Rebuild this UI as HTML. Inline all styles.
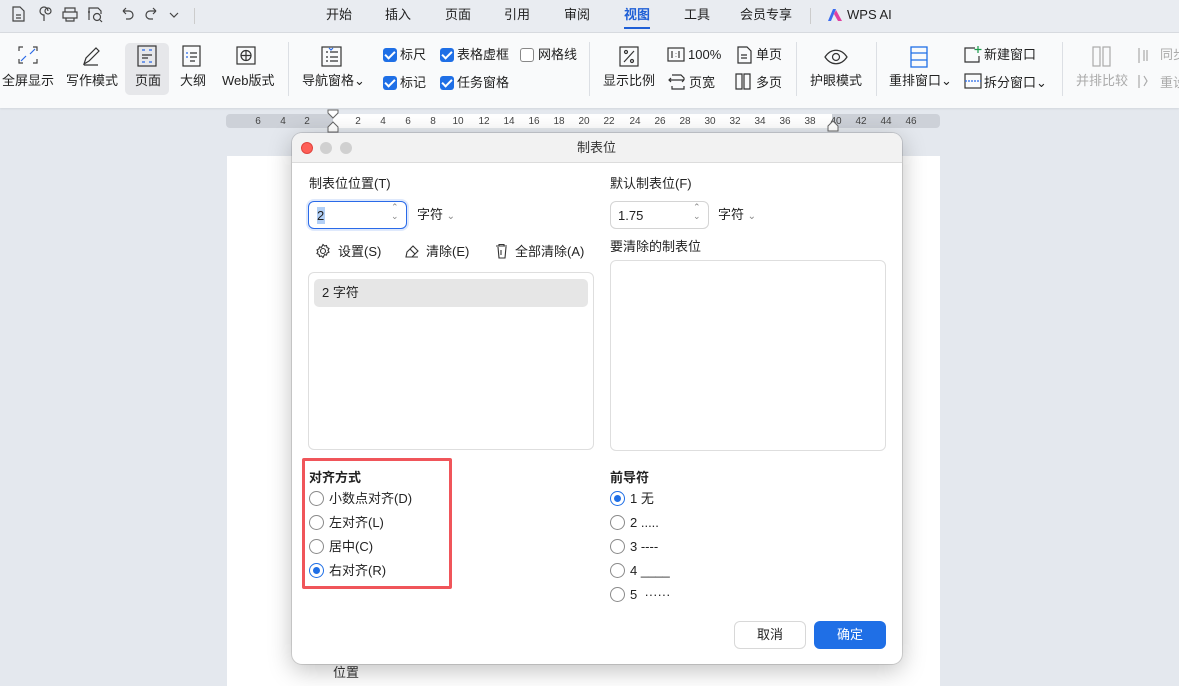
<!DOCTYPE html>
<html><head><meta charset="utf-8">
<style>
*{margin:0;padding:0;box-sizing:border-box}
body{width:1179px;height:676px;overflow:hidden;position:relative;background:#e4e8ee;font-family:"Liberation Sans","Noto Sans CJK SC",sans-serif;color:#222;font-size:13px}
.a{position:absolute}
.t{position:absolute;white-space:nowrap;line-height:17px}
.tabs{left:0;top:0;width:1179px;height:33px;background:#e9ecf1;border-bottom:1px solid #d8dbe0}
.tool{left:0;top:33px;width:1179px;height:75px;background:#f9fafb;box-shadow:0 1px 2px rgba(0,0,0,.08)}
.sep{position:absolute;width:1px;background:#dcdfe4}
.cb{position:absolute;width:14px;height:14px;border-radius:3px;background:#1f6fe6}
.cb:after{content:"";position:absolute;left:4px;top:1px;width:4px;height:8px;border:solid #fff;border-width:0 2px 2px 0;transform:rotate(45deg)}
.cbo{position:absolute;width:14px;height:14px;border-radius:3px;border:1px solid #888;background:#fff}
.ic{position:absolute}
.ruler{left:226px;top:114px;width:714px;height:14px;background:#cdd1d8;border-radius:4px}
.rw{left:333px;top:114px;width:499px;height:14px;background:#fff}
.rn{position:absolute;top:116px;font-size:10px;line-height:11px;color:#444;transform:translateX(-50%)}
.page{left:227px;top:156px;width:713px;height:530px;background:#fff}
.dlg{left:292px;top:133px;width:610px;height:531px;background:#fff;border-radius:10px;box-shadow:0 6px 24px rgba(0,0,0,.25),0 0 0 1px rgba(0,0,0,.12);overflow:hidden}
.dh{left:0;top:0;width:610px;height:30px;background:#f2f2f2;border-bottom:1px solid #dcdcdc}
.dot{position:absolute;width:12px;height:12px;border-radius:50%;top:9px}
.inp{position:absolute;height:28px;border:1px solid #d4d4d4;border-radius:6px;background:#fff}
.rad{position:absolute;width:15px;height:15px;border-radius:50%;border:1px solid #8a8a8a;background:#fff}
.rad.on{border-color:#1f6fe6}
.rad.on:after{content:"";position:absolute;left:3px;top:3px;width:7px;height:7px;border-radius:50%;background:#1f6fe6}
</style></head><body>
<div class="a tabs"></div>
<svg class="ic" style="left:8px;top:4px" width="180" height="20" fill="none" stroke="#444" stroke-width="1.2">
<path d="M5 3h7l4 4v10H5z M8 11h5 M8 14h5"/>
<path d="M36 17v-6a4 4 0 1 1 4 -4" /><circle cx="40" cy="7" r="3"/>
<path d="M57 8V4h10v4 M55 8h14v6H55z M58 14v3h8v-3"/>
<path d="M81 16V4h9l3 3v3 M80 8h2"/><circle cx="89" cy="13" r="3.5"/><path d="M92 16l2 2"/>
<path d="M115 7h6a4 4 0 0 1 0 8h-3 M115 7l3-3 M115 7l3 3"/>
<path d="M148 7h-6a4 4 0 0 0 0 8h3 M148 7l-3-3 M148 7l-3 3"/>
<path d="M162 9l4 4 4-4"/>
</svg>
<div class="sep" style="left:194px;top:8px;height:16px;background:#ccc"></div>
<div class="t" style="left:326px;top:6px">开始</div>
<div class="t" style="left:385px;top:6px">插入</div>
<div class="t" style="left:445px;top:6px">页面</div>
<div class="t" style="left:504px;top:6px">引用</div>
<div class="t" style="left:564px;top:6px">审阅</div>
<div class="t" style="left:624px;top:6px;color:#1f5fd6;font-weight:bold">视图</div>
<div class="a" style="left:624px;top:27px;width:26px;height:2px;background:#1f5fd6"></div>
<div class="t" style="left:684px;top:6px">工具</div>
<div class="t" style="left:740px;top:6px">会员专享</div>
<div class="sep" style="left:810px;top:8px;height:16px;background:#ccc"></div>
<svg class="ic" style="left:827px;top:8px" width="16" height="14"><path d="M1 13L6 1h3L4 13z" fill="#3a6cf0"/><path d="M7 6l4 7h4L9 2z" fill="#e040a0"/></svg>
<div class="t" style="left:847px;top:6px">WPS AI</div>

<div class="a tool"></div>
<div class="a" style="left:125px;top:43px;width:44px;height:52px;background:#e6e7ea;border-radius:5px"></div>
<svg class="ic" style="left:0;top:44px" width="290" height="24" fill="none" stroke="#333" stroke-width="1.2">
<path d="M19 7V3h4 M33 3h4v4 M37 15v4h-4 M23 19h-4v-4" stroke="#444"/><path d="M21 17l5-5 M35 5l-5 5" stroke="#2a6ae8"/>
<path d="M84 20l2-6 10-10 3 3-10 10z M84 21h14"/>
<rect x="138" y="2" width="18" height="20"/><path d="M142 6h3 M149 6h3 M142 18h3 M149 18h3" stroke="#2a6ae8"/><path d="M142 11h10 M142 14h6"/>
<rect x="183" y="2" width="17" height="20"/><path d="M190 9h7 M190 13h7 M190 17h5" /><path d="M186 9h2 M186 13h2" stroke="#2a6ae8"/>
<rect x="237" y="3" width="18" height="17"/><circle cx="246" cy="11.5" r="5"/><path d="M241 11.5h10 M246 6.5v10"/>
</svg>
<div class="t" style="left:2px;top:72px">全屏显示</div>
<div class="t" style="left:66px;top:72px">写作模式</div>
<div class="t" style="left:135px;top:72px">页面</div>
<div class="t" style="left:180px;top:72px">大纲</div>
<div class="t" style="left:222px;top:72px">Web版式</div>
<div class="sep" style="left:288px;top:42px;height:54px"></div>
<svg class="ic" style="left:320px;top:45px" width="24" height="24" fill="none" stroke="#333" stroke-width="1.2"><rect x="2" y="2" width="19" height="19"/><path d="M6 7h2 M10 7h8 M6 12h2 M10 12h8 M6 16h2 M10 16h8"/><path d="M9 3l2 2 2-2" stroke="#2a6ae8"/></svg>
<div class="t" style="left:302px;top:72px">导航窗格⌄</div>
<div class="cb" style="left:383px;top:48px"></div><div class="t" style="left:400px;top:46px">标尺</div>
<div class="cb" style="left:440px;top:48px"></div><div class="t" style="left:457px;top:46px">表格虚框</div>
<div class="cbo" style="left:520px;top:48px"></div><div class="t" style="left:538px;top:46px">网格线</div>
<div class="cb" style="left:383px;top:76px"></div><div class="t" style="left:400px;top:74px">标记</div>
<div class="cb" style="left:440px;top:76px"></div><div class="t" style="left:457px;top:74px">任务窗格</div>
<div class="sep" style="left:589px;top:42px;height:54px"></div>
<svg class="ic" style="left:618px;top:45px" width="24" height="24" fill="none" stroke="#333" stroke-width="1.2"><rect x="2" y="2" width="18" height="19"/><path d="M6 17l10-11"/><circle cx="8" cy="7" r="1.5"/><circle cx="14" cy="16" r="1.5"/></svg>
<div class="t" style="left:603px;top:72px">显示比例</div>
<svg class="ic" style="left:667px;top:46px" width="120" height="46" fill="none" stroke="#333" stroke-width="1.2">
<rect x="1" y="2" width="16" height="13"/><path d="M5 5v7 M12 5v7 M9 7v.5 M9 10v.5"/>
<path d="M5 29h9l3 3v2 M17 40v3H5v-3 M2 34h15 M4 36l-2 -2 2-2 M15 36l2-2"/>
<path d="M71 1h9l4 4v12H71z M74 9h6 M74 12h6"/>
<path d="M69 28h6v15h-6z M77 28h6v15h-6z"/>
</svg>
<div class="t" style="left:688px;top:46px">100%</div>
<div class="t" style="left:689px;top:74px">页宽</div>
<div class="t" style="left:756px;top:46px">单页</div>
<div class="t" style="left:756px;top:74px">多页</div>
<div class="sep" style="left:796px;top:42px;height:54px"></div>
<svg class="ic" style="left:824px;top:47px" width="24" height="20" fill="none" stroke="#333" stroke-width="1.2"><path d="M1 10c6-9 16-9 22 0c-6 9-16 9-22 0z"/><circle cx="12" cy="10" r="3.5"/></svg>
<div class="t" style="left:810px;top:72px">护眼模式</div>
<div class="sep" style="left:876px;top:42px;height:54px"></div>
<svg class="ic" style="left:909px;top:45px" width="20" height="24" fill="none" stroke="#1f6fe6" stroke-width="1.3"><rect x="2" y="2" width="16" height="20"/><path d="M2 8h16 M2 15h16"/></svg>
<div class="t" style="left:889px;top:72px">重排窗口⌄</div>
<svg class="ic" style="left:963px;top:45px" width="20" height="46" fill="none" stroke="#333" stroke-width="1.2"><path d="M12 3H2v14h14v-6"/><path d="M15 1v7 M11.5 4.5h7" stroke="#1a9a4a"/><rect x="2" y="29" width="16" height="14"/><path d="M2 36h16" stroke="#2a6ae8" stroke-dasharray="2 1"/></svg>
<div class="t" style="left:984px;top:46px">新建窗口</div>
<div class="t" style="left:984px;top:74px">拆分窗口⌄</div>
<div class="sep" style="left:1062px;top:42px;height:54px"></div>
<svg class="ic" style="left:1092px;top:45px" width="87" height="46" fill="none" stroke="#aaa" stroke-width="1.2"><rect x="1" y="2" width="7" height="19"/><rect x="11" y="2" width="7" height="19"/><path d="M47 3v15 M52 5v11 M55 5v11 M47 30v13 M52 31l3 5-3 5"/></svg>
<div class="t" style="left:1076px;top:72px;color:#aaa">并排比较</div>
<div class="t" style="left:1160px;top:46px;color:#aaa">同步</div>
<div class="t" style="left:1160px;top:74px;color:#aaa">重设</div>

<div class="a ruler"></div><div class="a rw"></div>
<div class="rn" style="left:258px">6</div><div class="rn" style="left:283px">4</div><div class="rn" style="left:307px">2</div>
<div class="rn" style="left:358px">2</div><div class="rn" style="left:383px">4</div><div class="rn" style="left:408px">6</div><div class="rn" style="left:433px">8</div><div class="rn" style="left:458px">10</div><div class="rn" style="left:484px">12</div><div class="rn" style="left:509px">14</div><div class="rn" style="left:534px">16</div><div class="rn" style="left:559px">18</div><div class="rn" style="left:584px">20</div><div class="rn" style="left:609px">22</div><div class="rn" style="left:635px">24</div><div class="rn" style="left:660px">26</div><div class="rn" style="left:685px">28</div><div class="rn" style="left:710px">30</div><div class="rn" style="left:735px">32</div><div class="rn" style="left:760px">34</div><div class="rn" style="left:785px">36</div><div class="rn" style="left:810px">38</div><div class="rn" style="left:836px">40</div><div class="rn" style="left:861px">42</div><div class="rn" style="left:886px">44</div><div class="rn" style="left:911px">46</div>
<svg class="ic" style="left:327px;top:109px" width="12" height="24" fill="#fff" stroke="#666"><path d="M1 1h10v3l-5 5-5-5z M6 13l5 5v5H1v-5z"/></svg>
<svg class="ic" style="left:827px;top:120px" width="12" height="12" fill="#fff" stroke="#666"><path d="M6 1l5 5v5H1V6z"/></svg>

<div class="a page"></div>
<div class="t" style="left:333px;top:664px;color:#333">位置</div>

<div class="a dlg">
 <div class="a dh"></div>
 <div class="dot" style="left:9px;background:#fe5f57;border:1px solid #e0443e"></div>
 <div class="dot" style="left:28px;background:#d0d0d0"></div>
 <div class="dot" style="left:48px;background:#d0d0d0"></div>
 <div class="t" style="left:285px;top:6px;color:#333">制表位</div>

 <div class="t" style="left:17px;top:42px">制表位位置(T)</div>
 <div class="inp" style="left:16px;top:68px;width:99px;border:1.5px solid #2a6ae8;box-shadow:0 0 0 2px rgba(42,106,232,.15)"></div>
 <div class="a" style="left:25px;top:74px;width:8px;height:17px;background:#b3d0f6"></div>
 <div class="t" style="left:25px;top:74px">2</div>
 <div class="t" style="left:99px;top:70px;font-size:9px;color:#888;line-height:9px">⌃<br>⌄</div>
 <div class="t" style="left:125px;top:73px">字符 <span style="color:#888;font-size:10px">⌄</span></div>

 <div class="t" style="left:318px;top:42px">默认制表位(F)</div>
 <div class="inp" style="left:318px;top:68px;width:99px"></div>
 <div class="t" style="left:326px;top:74px">1.75</div>
 <div class="t" style="left:401px;top:70px;font-size:9px;color:#888;line-height:9px">⌃<br>⌄</div>
 <div class="t" style="left:426px;top:73px">字符 <span style="color:#888;font-size:10px">⌄</span></div>

 <svg class="ic" style="left:24px;top:110px" width="290" height="16" fill="none" stroke="#333" stroke-width="1.1"><circle cx="7" cy="8" r="2.5"/><path d="M7 1.5l1.5 1.5 2-.5.5 2 2 1-1 1.8 1 1.8-2 1-.5 2-2-.5L7 14.5l-1.5-1.5-2 .5-.5-2-2-1 1-1.8-1-1.8 2-1 .5-2 2 .5z"/>
 <path d="M91 9l6-6 5 5-6 6h-6z M94 6l5 5 M90 14h12"/>
 <path d="M180 3h11 M183 3v-1.5h5V3 M182 4l1 11h6l1-11 M185 7v5"/></svg>
 <div class="t" style="left:46px;top:110px">设置(S)</div>
 <div class="t" style="left:134px;top:110px">清除(E)</div>
 <div class="t" style="left:223px;top:110px">全部清除(A)</div>
 <div class="t" style="left:318px;top:105px">要清除的制表位</div>

 <div class="a" style="left:16px;top:139px;width:286px;height:178px;border:1px solid #dedede;border-radius:6px"></div>
 <div class="a" style="left:22px;top:146px;width:274px;height:28px;background:#e6e6e6;border-radius:5px"></div>
 <div class="t" style="left:30px;top:151px">2 字符</div>
 <div class="a" style="left:318px;top:127px;width:276px;height:191px;border:1px solid #dedede;border-radius:6px"></div>

 <div class="a" style="left:10px;top:325px;width:150px;height:131px;border:3px solid #f0555a;border-radius:2px"></div>
 <div class="t" style="left:17px;top:336px;font-weight:bold">对齐方式</div>
 <div class="rad" style="left:17px;top:358px"></div><div class="t" style="left:37px;top:357px">小数点对齐(D)</div>
 <div class="rad" style="left:17px;top:382px"></div><div class="t" style="left:37px;top:381px">左对齐(L)</div>
 <div class="rad" style="left:17px;top:406px"></div><div class="t" style="left:37px;top:405px">居中(C)</div>
 <div class="rad on" style="left:17px;top:430px"></div><div class="t" style="left:37px;top:429px">右对齐(R)</div>

 <div class="t" style="left:318px;top:336px;font-weight:bold">前导符</div>
 <div class="rad on" style="left:318px;top:358px"></div><div class="t" style="left:338px;top:357px">1 无</div>
 <div class="rad" style="left:318px;top:382px"></div><div class="t" style="left:338px;top:381px">2 .....</div>
 <div class="rad" style="left:318px;top:406px"></div><div class="t" style="left:338px;top:405px">3 ----</div>
 <div class="rad" style="left:318px;top:430px"></div><div class="t" style="left:338px;top:429px">4 ____</div>
 <div class="rad" style="left:318px;top:454px"></div><div class="t" style="left:338px;top:453px">5 &nbsp;······</div>

 <div class="a" style="left:442px;top:488px;width:72px;height:28px;border:1px solid #d8d8d8;border-radius:6px;background:#fff;text-align:center;line-height:26px">取消</div>
 <div class="a" style="left:522px;top:488px;width:72px;height:28px;border-radius:6px;background:#1f6fe6;color:#fff;text-align:center;line-height:28px">确定</div>
</div>
</body></html>
